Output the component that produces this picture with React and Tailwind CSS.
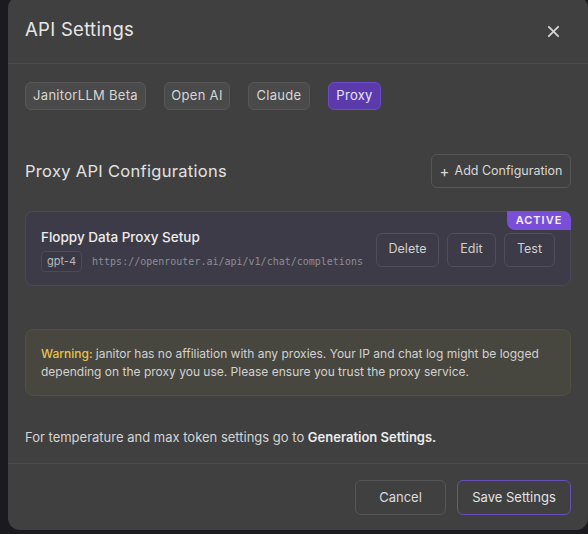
import React from "react";

const tabs = [
  { label: "JanitorLLM Beta", active: false, w: "w-[121px]" },
  { label: "Open AI", active: false, w: "w-[66px]" },
  { label: "Claude", active: false, w: "w-[62px]" },
  { label: "Proxy", active: true, w: "w-[53px]" },
];

function CloseIcon() {
  return (
    <svg width="13" height="13" viewBox="0 0 14 14" fill="none" stroke="#d4d4d4" strokeWidth="2" strokeLinecap="round">
      <path d="M2 2 L12 12 M12 2 L2 12" />
    </svg>
  );
}

export default function App() {
  return (
    <div className="w-[588px] h-[534px] overflow-hidden bg-[#1b1b1f] font-['Inter','Liberation_Sans',sans-serif]">
      <div className="ml-[8px] mt-[-4px] w-[580px] h-[534px] rounded-xl bg-[#404040] flex flex-col">
        {/* header */}
        <div className="h-[68px] shrink-0 border-b border-[#4a4a4a] px-[17px] flex items-center justify-between">
          <h1 className="text-[18.5px] text-[#e6e6e6] tracking-[0.3px]">API Settings</h1>
          <button className="mr-[11px] mt-[3px]">
            <CloseIcon />
          </button>
        </div>

        {/* body */}
        <div className="px-[17px] pt-[18px] flex flex-col">
          <div className="flex gap-[18px]">
            {tabs.map((t) => (
              <button
                key={t.label}
                className={
                  t.active
                    ? `${t.w} h-[28px] rounded-md border border-[#6a4cc4] bg-[#5b3aab] text-[13px] text-[#e8e2fb] tracking-[0.3px]`
                    : `${t.w} h-[28px] rounded-md border border-[#585858] bg-[#4a4a4a] text-[13px] text-[#d6d6d6] tracking-[0.3px]`
                }
              >
                {t.label}
              </button>
            ))}
          </div>

          <div className="mt-[44px] flex items-center justify-between">
            <h2 className="text-[16.5px] text-[#e2e2e2] tracking-[0.3px]">Proxy API Configurations</h2>
            <button className="h-[34px] w-[140px] rounded-md border border-[#575757] text-[12.5px] text-[#d8d8d8] flex items-center justify-center gap-[5px]">
              <span className="text-[15px] leading-none">+</span>
              <span>Add Configuration</span>
            </button>
          </div>

          {/* configuration card */}
          <div className="relative mt-[23px] h-[75px] rounded-lg border border-[#4b4858] bg-[#3d3b47] pl-[15px] pr-[15px] flex items-center justify-between">
            <span className="absolute top-[-1px] right-[-1px] h-[19px] w-[64px] rounded-tr-lg rounded-bl-lg bg-[#7a4fd8] text-[11px] font-semibold tracking-[1px] text-[#f3efff] flex items-center justify-center">
              ACTIVE
            </span>
            <div className="flex flex-col pt-[2px] min-w-0">
              <div className="text-[13.5px] font-medium text-[#ececec] leading-[18px] whitespace-nowrap">Floppy Data Proxy Setup</div>
              <div className="mt-[5px] flex items-center gap-[10px] whitespace-nowrap">
                <span className="shrink-0 h-[21px] px-[5px] rounded border border-[#4d4b57] bg-[#3a3844] text-[11px] text-[#b8b8b8] flex items-center">
                  gpt-4
                </span>
                <span className="font-['DejaVu_Sans_Mono',monospace] text-[10px] text-[#8d8d94]">
                  https://openrouter.ai/api/v1/chat/completions
                </span>
              </div>
            </div>
            <div className="flex gap-[8px] mt-[2px] shrink-0">
              <button className="h-[34px] w-[63px] rounded-md border border-[#504e5a] text-[12.5px] text-[#cfcfcf]">Delete</button>
              <button className="h-[34px] w-[49px] rounded-md border border-[#504e5a] text-[12.5px] text-[#cfcfcf]">Edit</button>
              <button className="h-[34px] w-[51px] rounded-md border border-[#504e5a] text-[12.5px] text-[#cfcfcf]">Test</button>
            </div>
          </div>

          {/* warning */}
          <div className="mt-[43px] h-[67px] rounded-lg border border-[#525040] bg-[#47463f] px-[15px] flex items-center">
            <p className="text-[12px] leading-[18px] text-[#d2d2d2]">
              <span className="text-[#e8c34a] font-medium">Warning: </span>janitor has no affiliation with any proxies. Your IP and chat log might be logged depending on the proxy you use. Please ensure you trust the proxy service.
            </p>
          </div>

          <p className="mt-[32px] text-[13px] leading-[18px] text-[#d4d4d4]">
            For temperature and max token settings go to <span className="font-semibold text-[#ececec]">Generation Settings.</span>
          </p>
        </div>

        {/* footer */}
        <div className="mt-[17px] border-t border-[#4a4a4a] px-[17px] pt-[16px] flex justify-end gap-[11px]">
          <button className="h-[35px] w-[91px] rounded-md border border-[#565656] text-[13px] text-[#dcdcdc]">Cancel</button>
          <button className="h-[35px] w-[114px] rounded-md border border-[#6650b8] text-[13px] text-[#e2e2e2]">Save Settings</button>
        </div>
      </div>
    </div>
  );
}
